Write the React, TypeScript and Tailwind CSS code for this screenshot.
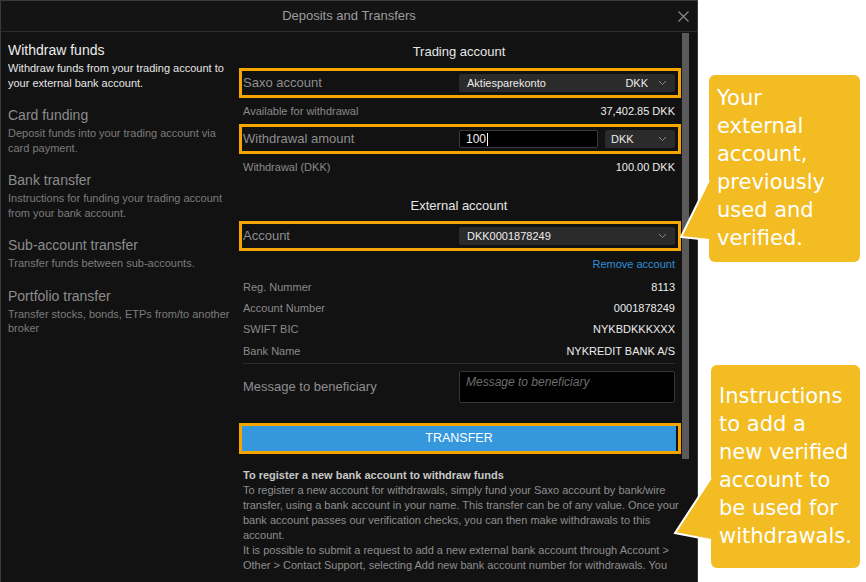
import React from "react";

const Chevron = () => (
  <svg width="9" height="6" viewBox="0 0 9 6" className="shrink-0">
    <polyline points="1,1 4.5,4.5 8,1" fill="none" stroke="#858585" strokeWidth="1" />
  </svg>
);

const sideItems = [
  {
    title: "Withdraw funds",
    desc: "Withdraw funds from your trading account to your external bank account.",
    active: true,
  },
  { title: "Card funding", desc: "Deposit funds into your trading account via card payment." },
  {
    title: "Bank transfer",
    desc: "Instructions for funding your trading account from your bank account.",
  },
  { title: "Sub-account transfer", desc: "Transfer funds between sub-accounts." },
  {
    title: "Portfolio transfer",
    desc: "Transfer stocks, bonds, ETPs from/to another broker",
  },
];

function InfoRow({ label, value, className = "" }: { label: string; value: string; className?: string }) {
  return (
    <div className={`flex h-[14px] items-center justify-between text-[11px] leading-[14px] ${className}`}>
      <span className="text-[#8a8a8a]">{label}</span>
      <span className="text-[#ececec]">{value}</span>
    </div>
  );
}

export default function App() {
  return (
    <div className="relative flex h-[582px] w-[866px] overflow-hidden bg-white font-['Liberation_Sans',Arial,sans-serif]">
      {/* dialog */}
      <div className="flex h-[582px] w-[698px] shrink-0 flex-col border-l border-r border-t border-[#3a3a3a] bg-[#121212]">
        <div className="grid h-[31px] shrink-0 grid-cols-[1fr_auto_1fr] items-center border-b border-[#2c2c2c] bg-[#141414]">
          <div />
          <div className="text-[13px] text-[#9c9c9c]">Deposits and Transfers</div>
          <div className="flex justify-end pr-[8px]">
            <svg width="11" height="11" viewBox="0 0 11 11">
              <path d="M0.5 0.5 L10.5 10.5 M10.5 0.5 L0.5 10.5" stroke="#8a8a8a" strokeWidth="1.2" fill="none" />
            </svg>
          </div>
        </div>

        <div className="flex min-h-0 flex-1">
          {/* sidebar */}
          <div className="w-[233px] shrink-0 pl-[7px] pt-[9px]">
            {sideItems.map((it) => (
              <div key={it.title} className="mb-[16px]">
                <div
                  className={`text-[14px] leading-[18px] ${it.active ? "text-[#ececec]" : "text-[#8c8c8c]"}`}
                >
                  {it.title}
                </div>
                <div
                  className={`mt-[2px] text-[11px] leading-[14.5px] ${it.active ? "text-[#e6e6e6]" : "text-[#7c7c7c]"}`}
                >
                  {it.desc}
                </div>
              </div>
            ))}
          </div>

          {/* main */}
          <div className="flex w-[463px] flex-col">
            <div className="flex h-[428px] shrink-0">
              <div className="ml-[9px] flex w-[432px] flex-col">
                <div className="mt-[12px] h-[16px] text-center text-[13px] leading-[16px] text-[#e6e6e6]">
                  Trading account
                </div>

                <div className="-ml-[4px] -mr-[6px] mt-[8px] flex h-[30px] items-center border-[3px] border-[#f5a400] pl-[1px] pr-[3px]">
                  <div className="w-[216px] text-[13px] text-[#8e8e8e]">Saxo account</div>
                  <div className="flex h-[18px] w-[216px] items-center rounded-[2px] bg-[#2b2b2b] pl-[8px] pr-[8px] text-[11px] text-[#ededed]">
                    <span className="flex-1">Aktiesparekonto</span>
                    <span className="mr-[10px]">DKK</span>
                    <Chevron />
                  </div>
                </div>

                <InfoRow className="mt-[6px]" label="Available for withdrawal" value="37,402.85 DKK" />

                <div className="-ml-[4px] -mr-[6px] mt-[6px] flex h-[30px] items-center border-[3px] border-[#f5a400] pl-[1px] pr-[3px]">
                  <div className="w-[216px] text-[13px] text-[#8e8e8e]">Withdrawal amount</div>
                  <div className="flex w-[216px] items-center gap-[7px]">
                    <div className="flex h-[18px] w-[139px] items-center rounded-[2px] border border-[#3a3a3a] bg-black pl-[6px] text-[12px] text-[#f0f0f0]">
                      100<span className="ml-[1px] h-[13px] w-px bg-white" />
                    </div>
                    <div className="flex h-[18px] flex-1 items-center rounded-[2px] bg-[#2b2b2b] pl-[6px] pr-[8px] text-[11px] text-[#ededed]">
                      <span className="flex-1">DKK</span>
                      <Chevron />
                    </div>
                  </div>
                </div>

                <InfoRow className="mt-[6px]" label="Withdrawal (DKK)" value="100.00 DKK" />

                <div className="mt-[24px] h-[16px] text-center text-[13px] leading-[16px] text-[#e6e6e6]">
                  External account
                </div>

                <div className="-ml-[4px] -mr-[6px] mt-[7px] flex h-[30px] items-center border-[3px] border-[#f5a400] pl-[1px] pr-[3px]">
                  <div className="w-[216px] text-[13px] text-[#8e8e8e]">Account</div>
                  <div className="flex h-[18px] w-[216px] items-center rounded-[2px] bg-[#2b2b2b] pl-[8px] pr-[8px] text-[11px] text-[#ededed]">
                    <span className="flex-1">DKK0001878249</span>
                    <Chevron />
                  </div>
                </div>

                <div className="mt-[6px] h-[14px] text-right text-[11px] leading-[14px] text-[#2f8fd8]">
                  Remove account
                </div>

                <InfoRow className="mt-[9px]" label="Reg. Nummer" value="8113" />
                <InfoRow className="mt-[7px]" label="Account Number" value="0001878249" />
                <InfoRow className="mt-[7px]" label="SWIFT BIC" value="NYKBDKKKXXX" />
                <InfoRow className="mt-[8px]" label="Bank Name" value="NYKREDIT BANK A/S" />

                <div className="mt-[5px] h-px bg-[#2c2c2c]" />

                <div className="mt-[7px] flex h-[32px] items-center">
                  <div className="w-[216px] text-[13px] text-[#8e8e8e]">Message to beneficiary</div>
                  <div className="h-[32px] w-[216px] rounded-[2px] border border-[#353535] bg-black pl-[6px] pt-[1px] text-[12px] italic text-[#6c6c6c]">
                    Message to beneficiary
                  </div>
                </div>

                <div className="-ml-[4px] -mr-[6px] mt-[20px] h-[31px] border-[3px] border-[#f5a400] pr-[2px]">
                  <div className="flex h-full items-center justify-center bg-[#3597dc] text-[12.5px] text-white">
                    TRANSFER
                  </div>
                </div>
              </div>
              <div className="w-[7px]" />
              <div className="mt-[1px] h-[426px] w-[7px] bg-[#5a5a5a]" />
            </div>

            <div className="min-h-0 flex-1 overflow-hidden pl-[9px] pt-[8px]">
              <div className="w-[442px] text-[11px] leading-[15px]">
                <div className="font-bold text-[#c8c8c8]">To register a new bank account to withdraw funds</div>
                <p className="text-[#8e8e8e]">
                  To register a new account for withdrawals, simply fund your Saxo account by bank/wire
                  transfer, using a bank account in your name. This transfer can be of any value. Once your
                  bank account passes our verification checks, you can then make withdrawals to this
                  account.
                </p>
                <p className="text-[#8e8e8e]">
                  It is possible to submit a request to add a new external bank account through Account &gt;
                  Other &gt; Contact Support, selecting Add new bank account number for withdrawals. You
                </p>
              </div>
            </div>
          </div>
        </div>
      </div>

      {/* callouts */}
      <div className="flex flex-col pl-[11px] pt-[75px] font-['DejaVu_Sans',sans-serif] text-[21px] leading-[28px] text-white">
        <div className="h-[187px] w-[151px] rounded-[6px] bg-[#f2bc22] px-[8px] pt-[9px]">
          Your external account, previously used and verified.
        </div>
        <div className="ml-[2px] mt-[103px] h-[203px] w-[149px] rounded-[6px] bg-[#f2bc22] pl-[8px] pr-[6px] pt-[17px]">
          Instructions to add a new verified account to be used for withdrawals.
        </div>
      </div>

      <svg className="pointer-events-none absolute left-0 top-0" width="866" height="582">
        <polygon points="712,180 709,180 681,237 709,240 712,240" fill="#f2bc22" />
        <polyline points="709,180 681,237 709,240" fill="none" stroke="#ffffff" strokeWidth="2" />
        <polygon points="714,478 711,478 675,533 711,540 714,540" fill="#f2bc22" />
        <polyline points="711,478 675,533 711,540" fill="none" stroke="#ffffff" strokeWidth="2" />
      </svg>
    </div>
  );
}
